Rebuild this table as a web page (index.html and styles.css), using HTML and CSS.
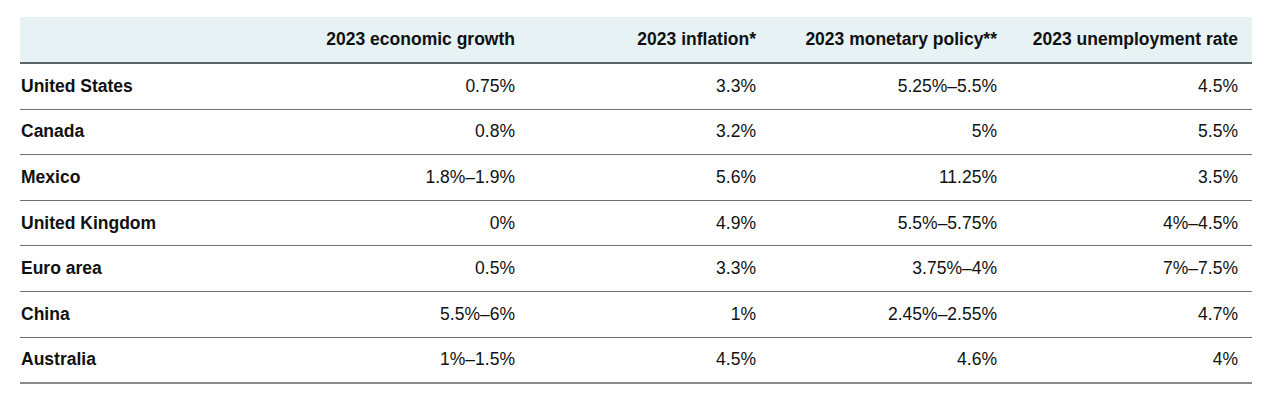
FILE: index.html
```html
<!DOCTYPE html>
<html lang="en">
<head>
<meta charset="utf-8">
<title>2023 economic outlook</title>
<link rel="stylesheet" href="styles.css">
</head>
<body>
<table class="data">
  <colgroup>
    <col class="c-name">
    <col class="c-val">
    <col class="c-val">
    <col class="c-val">
    <col class="c-val">
  </colgroup>
  <thead>
    <tr>
      <th class="name"></th>
      <th>2023 economic growth</th>
      <th>2023 inflation*</th>
      <th>2023 monetary policy**</th>
      <th>2023 unemployment rate</th>
    </tr>
  </thead>
  <tbody>
    <tr><th class="name">United States</th><td>0.75%</td><td>3.3%</td><td>5.25%–5.5%</td><td>4.5%</td></tr>
    <tr><th class="name">Canada</th><td>0.8%</td><td>3.2%</td><td>5%</td><td>5.5%</td></tr>
    <tr><th class="name">Mexico</th><td>1.8%–1.9%</td><td>5.6%</td><td>11.25%</td><td>3.5%</td></tr>
    <tr><th class="name">United Kingdom</th><td>0%</td><td>4.9%</td><td>5.5%–5.75%</td><td>4%–4.5%</td></tr>
    <tr><th class="name">Euro area</th><td>0.5%</td><td>3.3%</td><td>3.75%–4%</td><td>7%–7.5%</td></tr>
    <tr><th class="name">China</th><td>5.5%–6%</td><td>1%</td><td>2.45%–2.55%</td><td>4.7%</td></tr>
    <tr><th class="name">Australia</th><td>1%–1.5%</td><td>4.5%</td><td>4.6%</td><td>4%</td></tr>
  </tbody>
</table>
</body>
</html>
```
FILE: styles.css
```css
html, body {
  margin: 0;
  padding: 0;
  background: #ffffff;
}

body {
  padding: 17px 0 0 20px;
  font-family: "Liberation Sans", Arial, sans-serif;
  color: #111111;
}

.data {
  border-collapse: collapse;
  table-layout: fixed;
  width: 1232px;
  font-size: 17.5px;
}

.c-name { width: 268px; }
.c-val { width: 241px; }

.data thead th {
  background: #e6f2f4;
  height: 45px;
  padding: 0 14px 0 0;
  text-align: right;
  font-weight: bold;
  border-bottom: 2px solid #5e6466;
  white-space: nowrap;
}

.data tbody th,
.data tbody td {
  height: 44.6px;
  padding: 0 14px 0 0;
  border-bottom: 1px solid #6e6e6e;
  text-align: right;
  font-weight: normal;
  white-space: nowrap;
}

.data th.name {
  text-align: left;
  padding-left: 1px;
  font-weight: bold;
}

.data tbody tr:last-child th,
.data tbody tr:last-child td {
  border-bottom: 2px solid #8a8a8a;
}
```
